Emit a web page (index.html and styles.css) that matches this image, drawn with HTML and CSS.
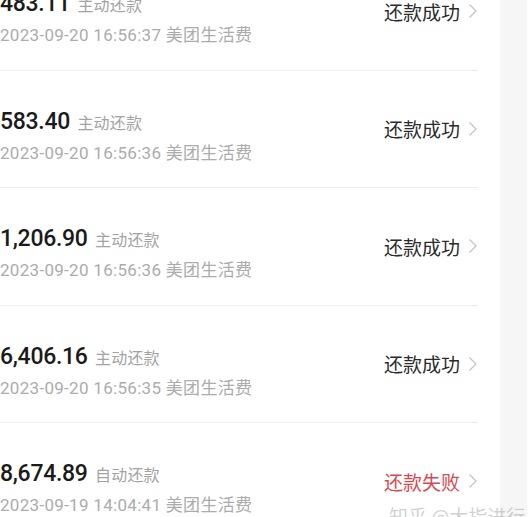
FILE: index.html
```html
<!DOCTYPE html>
<html lang="zh-CN">
<head>
    <meta charset="UTF-8" />
    <meta name="viewport" content="width=device-width, initial-scale=1.0" />
    <title>还款记录</title>
    <link rel="stylesheet" href="styles.css">
</head>
<body>
    <div class="page">
        <ul class="lista">
            <li class="riga">
                <div class="info">
                    <div class="importo">483.11 <span class="tipo">主动还款</span></div>
                    <div class="data">2023-09-20 16:56:37 美团生活费</div>
                </div>
                <div class="stato">还款成功 <svg class="freccia" viewBox="0 0 10 16"><path d="M1.5 1.5 L8 8 L1.5 14.5" /></svg></div>
            </li>
            <li class="riga">
                <div class="info">
                    <div class="importo">583.40 <span class="tipo">主动还款</span></div>
                    <div class="data">2023-09-20 16:56:36 美团生活费</div>
                </div>
                <div class="stato">还款成功 <svg class="freccia" viewBox="0 0 10 16"><path d="M1.5 1.5 L8 8 L1.5 14.5" /></svg></div>
            </li>
            <li class="riga">
                <div class="info">
                    <div class="importo">1,206.90 <span class="tipo">主动还款</span></div>
                    <div class="data">2023-09-20 16:56:36 美团生活费</div>
                </div>
                <div class="stato">还款成功 <svg class="freccia" viewBox="0 0 10 16"><path d="M1.5 1.5 L8 8 L1.5 14.5" /></svg></div>
            </li>
            <li class="riga">
                <div class="info">
                    <div class="importo">6,406.16 <span class="tipo">主动还款</span></div>
                    <div class="data">2023-09-20 16:56:35 美团生活费</div>
                </div>
                <div class="stato">还款成功 <svg class="freccia" viewBox="0 0 10 16"><path d="M1.5 1.5 L8 8 L1.5 14.5" /></svg></div>
            </li>
            <li class="riga">
                <div class="info">
                    <div class="importo">8,674.89 <span class="tipo">自动还款</span></div>
                    <div class="data">2023-09-19 14:04:41 美团生活费</div>
                </div>
                <div class="stato fallito">还款失败 <svg class="freccia" viewBox="0 0 10 16"><path d="M1.5 1.5 L8 8 L1.5 14.5" /></svg></div>
            </li>
        </ul>
        <div class="spazio"></div>
        <div class="barra"></div>
    </div>
    <div class="filigrana">知乎 @大指进行</div>
</body>
</html>
```

FILE: styles.css
```css
body {
    margin: 0;
    background-color: #fff;
    font-family: Roboto, "Noto Sans CJK SC", sans-serif;
    overflow: hidden;
}

.page {
    display: flex;
    height: 517px;
}

.lista {
    list-style: none;
    margin: -47px 0 0;
    padding: 0;
    width: 478px;
    flex-shrink: 0;
}

.riga {
    display: flex;
    align-items: center;
    justify-content: space-between;
    padding: 36px 0 24px;
    height: 57px;
    border-bottom: 1px solid #ededed;
}

.riga:nth-child(even) {
    height: 56px;
}

.importo {
    font-size: 23px;
    font-weight: 500;
    line-height: 31px;
    color: #1b1b1b;
    letter-spacing: -0.3px;
}

.tipo {
    font-size: 16px;
    font-weight: 400;
    color: #a3a3a3;
    margin-left: 2px;
    letter-spacing: 0.2px;
}

.data {
    margin-top: 2px;
    font-size: 17px;
    line-height: 24px;
    color: #acacac;
    letter-spacing: 0.3px;
}

.stato {
    display: flex;
    align-items: center;
    gap: 8px;
    font-size: 19px;
    color: #2b2b2b;
    margin-top: -37px;
    margin-bottom: -24px;
}

.stato.fallito {
    color: #d9484f;
}

.freccia {
    width: 10px;
    height: 16px;
    fill: none;
    stroke: #c4c4c4;
    stroke-width: 1.3;
}

.spazio {
    width: 22px;
}

.barra {
    width: 27px;
    background-color: #f6f6f6;
}

.filigrana {
    position: absolute;
    left: 389px;
    top: 502px;
    font-size: 19px;
    color: rgba(170, 170, 170, 0.55);
    font-family: "Noto Sans CJK SC", sans-serif;
    white-space: nowrap;
}
```
